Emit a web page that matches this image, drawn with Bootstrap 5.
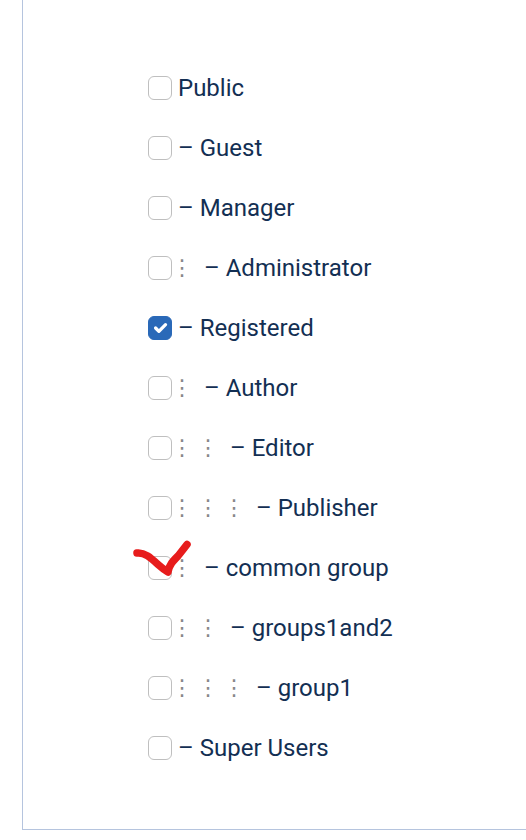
<!DOCTYPE html>
<html lang="en"><head><meta charset="utf-8"><title>User groups</title>
<link href="https://cdn.jsdelivr.net/npm/bootstrap@5.3.0/dist/css/bootstrap.min.css" rel="stylesheet">
<style>
body{font-family:Roboto,sans-serif;font-size:24px;line-height:36px;color:#132f53;background:#fff;overflow:hidden}
.panel{height:830px;margin-left:22px;padding:58px 0 0 125px;border-left:1px solid #b5c4de;border-bottom:1px solid #b5c4de}
.group-row{height:60px}
.form-check-input.group-box{width:24px;height:24px;margin:0 6px 0 0;border:1px solid #bfbfbf;border-radius:6px;flex:none}
.form-check-input.group-box:checked{background-color:#2a69b8;border-color:#2a69b8}
.level{font-family:"DejaVu Sans",sans-serif;font-size:22px;color:#888;width:26px;flex:none}
.level span{display:block;width:8px;text-indent:-7px;white-space:nowrap}
.pen{left:132px;top:540px;width:60px;height:40px}
</style></head><body>
<main class="panel"><div id="groups"></div></main>
<svg class="pen position-absolute" viewBox="0 0 60 40" fill="none"><path d="M5 13C13 12 20 19 26 24.500Q31 29 36 32C37 25 41 21 46 16Q50 11 55 4.500" stroke="#e71c1c" stroke-width="7.500" stroke-linecap="round" stroke-linejoin="round"/></svg>
<script>
const data=[["Public",0],["– Guest",0],["– Manager",0],["– Administrator",1],["– Registered",0,1],["– Author",1],["– Editor",2],["– Publisher",3],["– common group",1],["– groups1and2",2],["– group1",3],["– Super Users",0]];
document.getElementById("groups").innerHTML=data.map(([n,l,c])=>`<label class="group-row d-flex align-items-center text-nowrap"><input class="form-check-input group-box" type="checkbox"${c?" checked":""}>${'<span class="level"><span>⋮</span></span>'.repeat(l)}<span>${n}</span></label>`).join("");
</script>
<script src="https://cdn.jsdelivr.net/npm/bootstrap@5.3.0/dist/js/bootstrap.bundle.min.js"></script>
</body></html>
